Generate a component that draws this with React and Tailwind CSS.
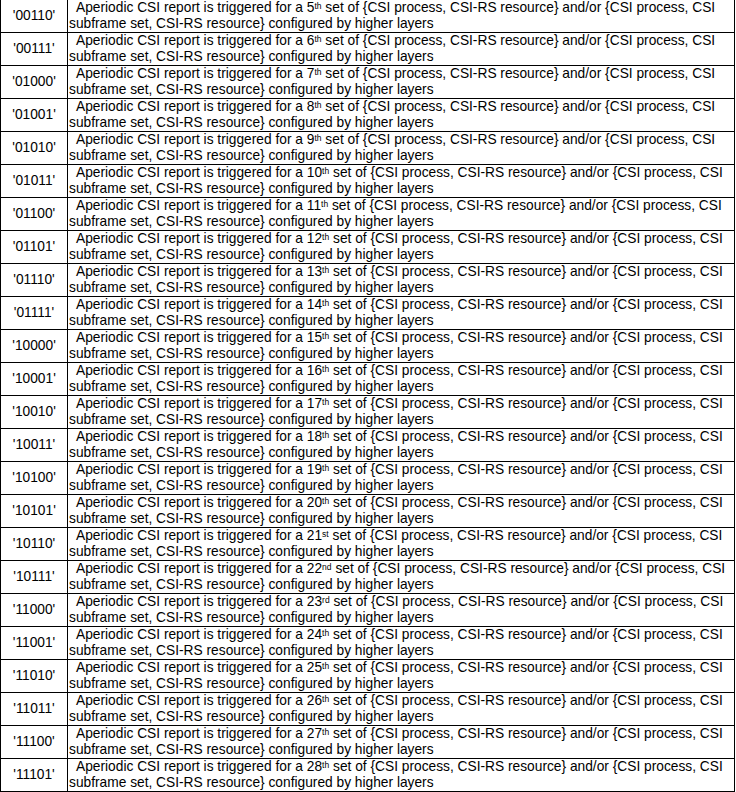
const rows = [
  ["00110", "5", "th"],
  ["00111", "6", "th"],
  ["01000", "7", "th"],
  ["01001", "8", "th"],
  ["01010", "9", "th"],
  ["01011", "10", "th"],
  ["01100", "11", "th"],
  ["01101", "12", "th"],
  ["01110", "13", "th"],
  ["01111", "14", "th"],
  ["10000", "15", "th"],
  ["10001", "16", "th"],
  ["10010", "17", "th"],
  ["10011", "18", "th"],
  ["10100", "19", "th"],
  ["10101", "20", "th"],
  ["10110", "21", "st"],
  ["10111", "22", "nd"],
  ["11000", "23", "rd"],
  ["11001", "24", "th"],
  ["11010", "25", "th"],
  ["11011", "26", "th"],
  ["11100", "27", "th"],
  ["11101", "28", "th"],
];

export default function App() {
  return (
    <div className="w-[736px] h-[792px] overflow-hidden bg-white text-black font-['Liberation_Sans',Arial,sans-serif] text-[13.75px] leading-[16px]">
      <div className="w-[735px] border-l border-r border-black">
        {rows.map(([code, n, suf]) => (
          <div key={code} className="flex border-b border-black">
            <div className="w-[67px] h-[32px] shrink-0 flex items-center justify-center border-r border-black">
              '{code}'
            </div>
            <div className="flex-1 h-[32px] pl-px indent-[7px] overflow-hidden">
              Aperiodic CSI report is triggered for a {n}
              <span className="inline-block indent-0 align-top text-[8.5px] leading-[10px] mt-px">{suf}</span> set of {"{"}CSI process, CSI-RS resource{"}"} and/or {"{"}CSI process, CSI subframe set, CSI-RS resource{"}"} configured by higher layers
            </div>
          </div>
        ))}
      </div>
    </div>
  );
}
